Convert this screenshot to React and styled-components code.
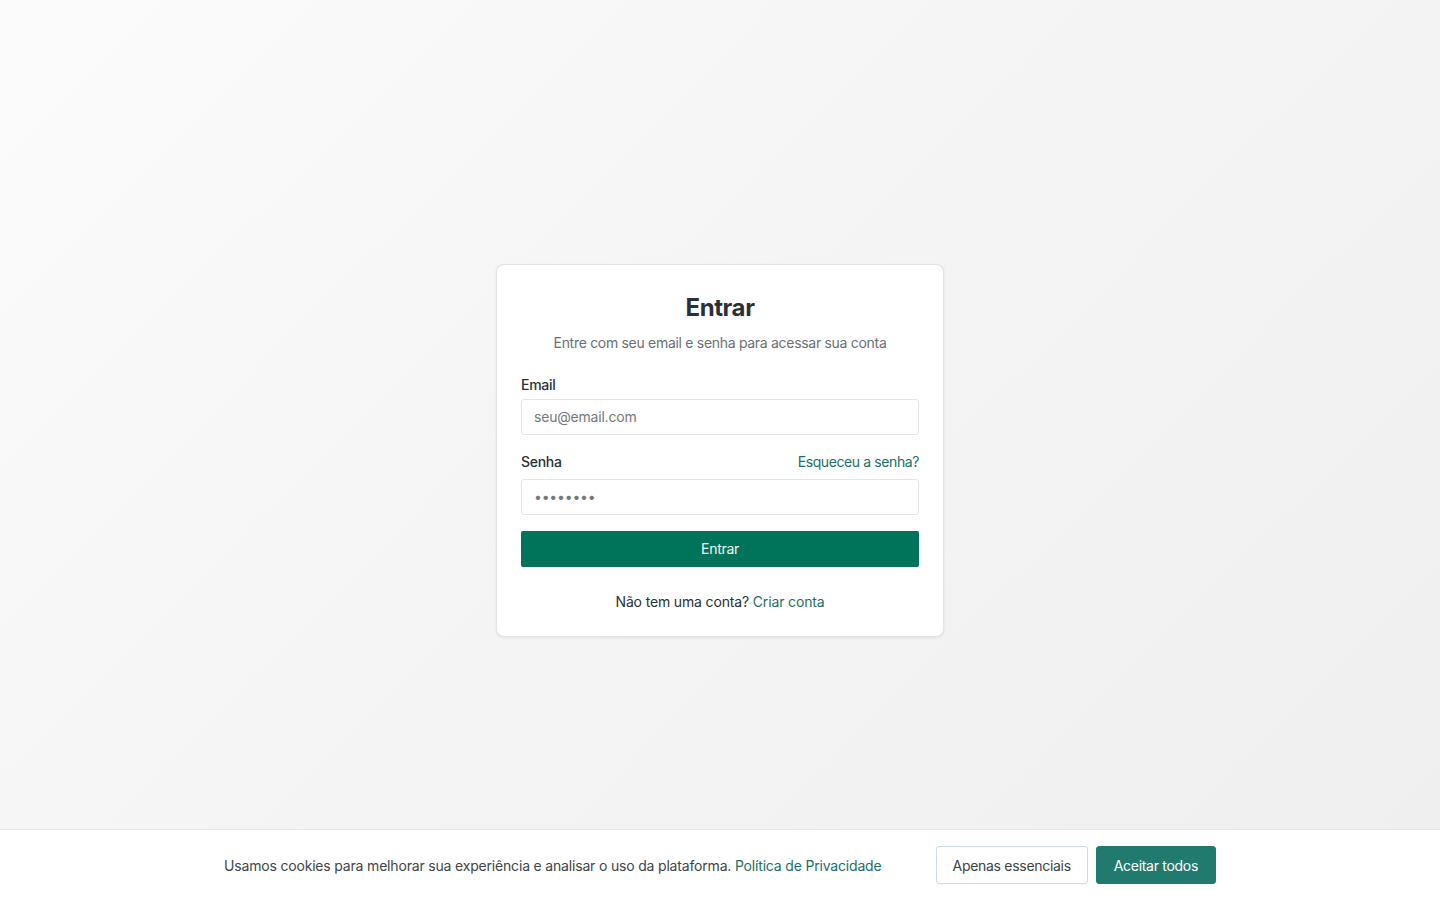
import React from "react";
import styled, { createGlobalStyle } from "styled-components";

const COLORS = {
  text: "#2b3036",
  muted: "#6b6f76",
  border: "#e2e4e7",
  primary: "#00745a",
  teal: "#217a6e",
  link: "#1b6f66",
};

const GlobalStyle = createGlobalStyle`
  html, body { margin: 0; padding: 0; }
  body {
    font-family: Inter, "Noto Sans", sans-serif;
    color: ${COLORS.text};
    background: #f6f6f6;
  }
  * { box-sizing: border-box; }
`;

const Page = styled.div`
  min-height: 100vh;
  display: flex;
  align-items: center;
  justify-content: center;
  background: linear-gradient(135deg, #fbfbfb 0%, #f3f3f3 60%, #efefef 100%);
`;

const Card = styled.div`
  width: 448px;
  background: #fff;
  border: 1px solid ${COLORS.border};
  border-radius: 8px;
  box-shadow: 0 1px 3px rgba(0, 0, 0, 0.08);
  padding: 24px 24px 26px;
  display: flex;
  flex-direction: column;
`;

const Title = styled.h1`
  margin: 4px 0 0;
  text-align: center;
  font-size: 24px;
  font-weight: 700;
  letter-spacing: -0.4px;
  color: ${COLORS.text};
`;

const Subtitle = styled.p`
  margin: 12px 0 0;
  text-align: center;
  font-size: 14px;
  letter-spacing: -0.3px;
  color: ${COLORS.muted};
`;

const Field = styled.div`
  display: flex;
  flex-direction: column;
  margin-top: ${(p) => p.$mt || 0}px;
`;

const LabelRow = styled.div`
  display: flex;
  justify-content: space-between;
  align-items: baseline;
  margin-bottom: ${(p) => p.$mb || 6}px;
`;

const Label = styled.label`
  font-size: 14px;
  font-weight: 500;
  letter-spacing: -0.3px;
  color: ${COLORS.text};
`;

const LinkText = styled.a`
  color: ${COLORS.link};
  text-decoration: none;
  font-size: 14px;
  letter-spacing: inherit;
`;

const Input = styled.input`
  height: 36px;
  width: 100%;
  border: 1px solid ${COLORS.border};
  border-radius: 3px;
  padding: 0 12px;
  font-family: inherit;
  font-size: 14px;
  letter-spacing: -0.2px;
  color: ${COLORS.text};
  outline: none;
  &::placeholder { color: #74787e; }
`;

const PrimaryButton = styled.button`
  margin-top: 16px;
  height: 36px;
  width: 100%;
  border: none;
  border-radius: 2px;
  background: ${COLORS.primary};
  color: #f2f7f5;
  font-family: inherit;
  font-size: 14px;
  letter-spacing: -0.3px;
  cursor: pointer;
`;

const Footer = styled.p`
  margin: 26px 0 0;
  text-align: center;
  font-size: 14px;
  letter-spacing: -0.15px;
  color: ${COLORS.text};
`;

const ForgotRow = styled.span`
  letter-spacing: -0.4px;
`;

const CookieBar = styled.div`
  position: fixed;
  left: 0;
  right: 0;
  bottom: 0;
  height: 71px;
  background: #fff;
  border-top: 1px solid #e6e6e6;
  display: flex;
  justify-content: center;
`;

const CookieInner = styled.div`
  width: 1024px;
  padding: 0 16px;
  display: flex;
  align-items: center;
  justify-content: space-between;
`;

const CookieText = styled.p`
  margin: 0;
  font-size: 14px;
  letter-spacing: -0.18px;
  color: #40454b;
`;

const Actions = styled.div`
  display: flex;
  gap: 8px;
`;

const CookieButton = styled.button`
  height: 38px;
  padding: 0 ${(p) => (p.$primary ? 17 : 16)}px;
  border-radius: 3px;
  font-family: inherit;
  font-size: 14px;
  letter-spacing: -0.3px;
  cursor: pointer;
  border: 1px solid ${(p) => (p.$primary ? COLORS.teal : "#c9dde3")};
  background: ${(p) => (p.$primary ? COLORS.teal : "#fff")};
  color: ${(p) => (p.$primary ? "#fff" : "#3d4248")};
`;

export default function App() {
  return (
    <>
      <GlobalStyle />
      <Page>
        <Card>
          <Title>Entrar</Title>
          <Subtitle>Entre com seu email e senha para acessar sua conta</Subtitle>
          <Field $mt={25}>
            <LabelRow>
              <Label htmlFor="email">Email</Label>
            </LabelRow>
            <Input id="email" placeholder="seu@email.com" />
          </Field>
          <Field $mt={16}>
            <LabelRow $mb={8}>
              <Label htmlFor="senha">Senha</Label>
              <ForgotRow>
                <LinkText href="#">Esqueceu a senha?</LinkText>
              </ForgotRow>
            </LabelRow>
            <Input id="senha" type="password" placeholder="••••••••" />
          </Field>
          <PrimaryButton>Entrar</PrimaryButton>
          <Footer>
            Não tem uma conta? <LinkText href="#">Criar conta</LinkText>
          </Footer>
        </Card>
      </Page>
      <CookieBar>
        <CookieInner>
          <CookieText>
            Usamos cookies para melhorar sua experiência e analisar o uso da plataforma.{" "}
            <LinkText href="#">Política de Privacidade</LinkText>
          </CookieText>
          <Actions>
            <CookieButton>Apenas essenciais</CookieButton>
            <CookieButton $primary>Aceitar todos</CookieButton>
          </Actions>
        </CookieInner>
      </CookieBar>
    </>
  );
}
